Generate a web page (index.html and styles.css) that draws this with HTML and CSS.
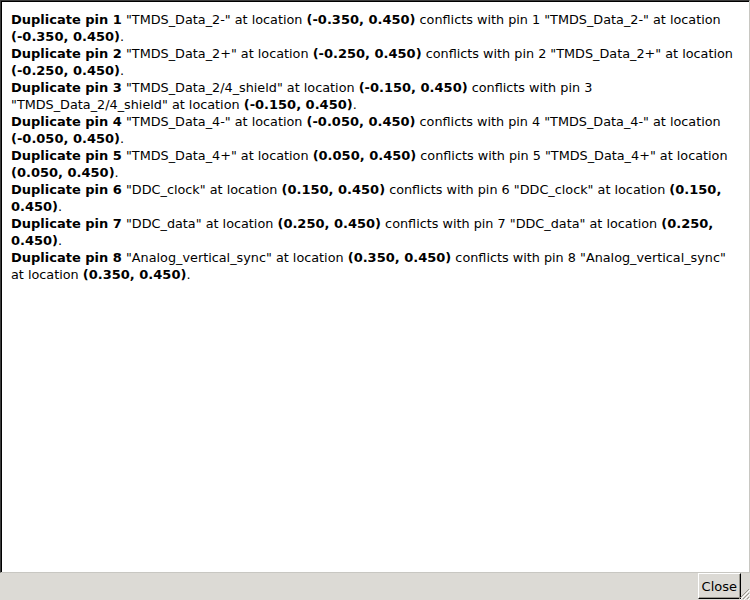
FILE: index.html
```html
<!DOCTYPE html>
<html>
<head>
<meta charset="utf-8">
<link rel="stylesheet" href="styles.css">
</head>
<body>
<div class="dialog">
  <div class="messages">
    <p><b>Duplicate pin 1</b> "TMDS_Data_2-" at location <b>(-0.350, 0.450)</b> conflicts with pin 1 "TMDS_Data_2-" at location <b>(-0.350, 0.450)</b>.</p>
    <p><b>Duplicate pin 2</b> "TMDS_Data_2+" at location <b>(-0.250, 0.450)</b> conflicts with pin 2 "TMDS_Data_2+" at location <b>(-0.250, 0.450)</b>.</p>
    <p><b>Duplicate pin 3</b> "TMDS_Data_2/4_shield" at location <b>(-0.150, 0.450)</b> conflicts with pin 3 "TMDS_Data_2/4_shield" at location <b>(-0.150, 0.450)</b>.</p>
    <p><b>Duplicate pin 4</b> "TMDS_Data_4-" at location <b>(-0.050, 0.450)</b> conflicts with pin 4 "TMDS_Data_4-" at location <b>(-0.050, 0.450)</b>.</p>
    <p><b>Duplicate pin 5</b> "TMDS_Data_4+" at location <b>(0.050, 0.450)</b> conflicts with pin 5 "TMDS_Data_4+" at location <b>(0.050, 0.450)</b>.</p>
    <p><b>Duplicate pin 6</b> "DDC_clock" at location <b>(0.150, 0.450)</b> conflicts with pin 6 "DDC_clock" at location <b>(0.150, 0.450)</b>.</p>
    <p><b>Duplicate pin 7</b> "DDC_data" at location <b>(0.250, 0.450)</b> conflicts with pin 7 "DDC_data" at location <b>(0.250, 0.450)</b>.</p>
    <p><b>Duplicate pin 8</b> "Analog_vertical_sync" at location <b>(0.350, 0.450)</b> conflicts with pin 8 "Analog_vertical_sync" at location <b>(0.350, 0.450)</b>.</p>
  </div>
  <div class="footer">
    <button class="close">Close</button>
    <svg class="grip" width="14" height="14" viewBox="0 0 14 14">
      <path d="M13 3 L3 13 M13 7 L7 13 M13 11 L11 13" stroke="#9a9890" stroke-width="1"/>
      <path d="M14 4 L4 14 M14 8 L8 14 M14 12 L12 14" stroke="#ffffff" stroke-width="1"/>
    </svg>
  </div>
</div>
</body>
</html>
```
FILE: styles.css
```css
html, body {
  margin: 0;
  padding: 0;
  width: 750px;
  height: 600px;
  overflow: hidden;
}
.dialog {
  width: 750px;
  height: 600px;
  display: flex;
  flex-direction: column;
  background: #dcdad5;
}
.messages {
  flex: 1;
  background: #ffffff;
  border-top: 1px solid #3c3c3c;
  border-left: 1px solid #3c3c3c;
  border-right: 1px solid #c8c7c2;
  border-bottom: 1px solid #c8c7c2;
  box-shadow: inset 1px 1px 0 #000;
  padding: 10px 11px 0 10px;
  font-family: "DejaVu Sans", sans-serif;
  font-size: 12.8px;
  line-height: 17px;
  color: #000;
}
.messages p {
  margin: 0;
}
.messages b {
  font-size: 13px;
}
.footer {
  height: 27px;
  display: flex;
  justify-content: flex-end;
  align-items: flex-start;
  position: relative;
}
.close {
  margin: 0 9px 0 0;
  height: 26px;
  padding: 0 3px;
  background: #dcdad5;
  border: 1px solid;
  border-color: #ffffff #000000 #000000 #ffffff;
  box-shadow: inset -1px -1px 0 #9a9890;
  font-family: "DejaVu Sans", sans-serif;
  font-size: 13px;
  color: #000;
}
.grip {
  position: absolute;
  right: 0;
  bottom: 0;
}
```
